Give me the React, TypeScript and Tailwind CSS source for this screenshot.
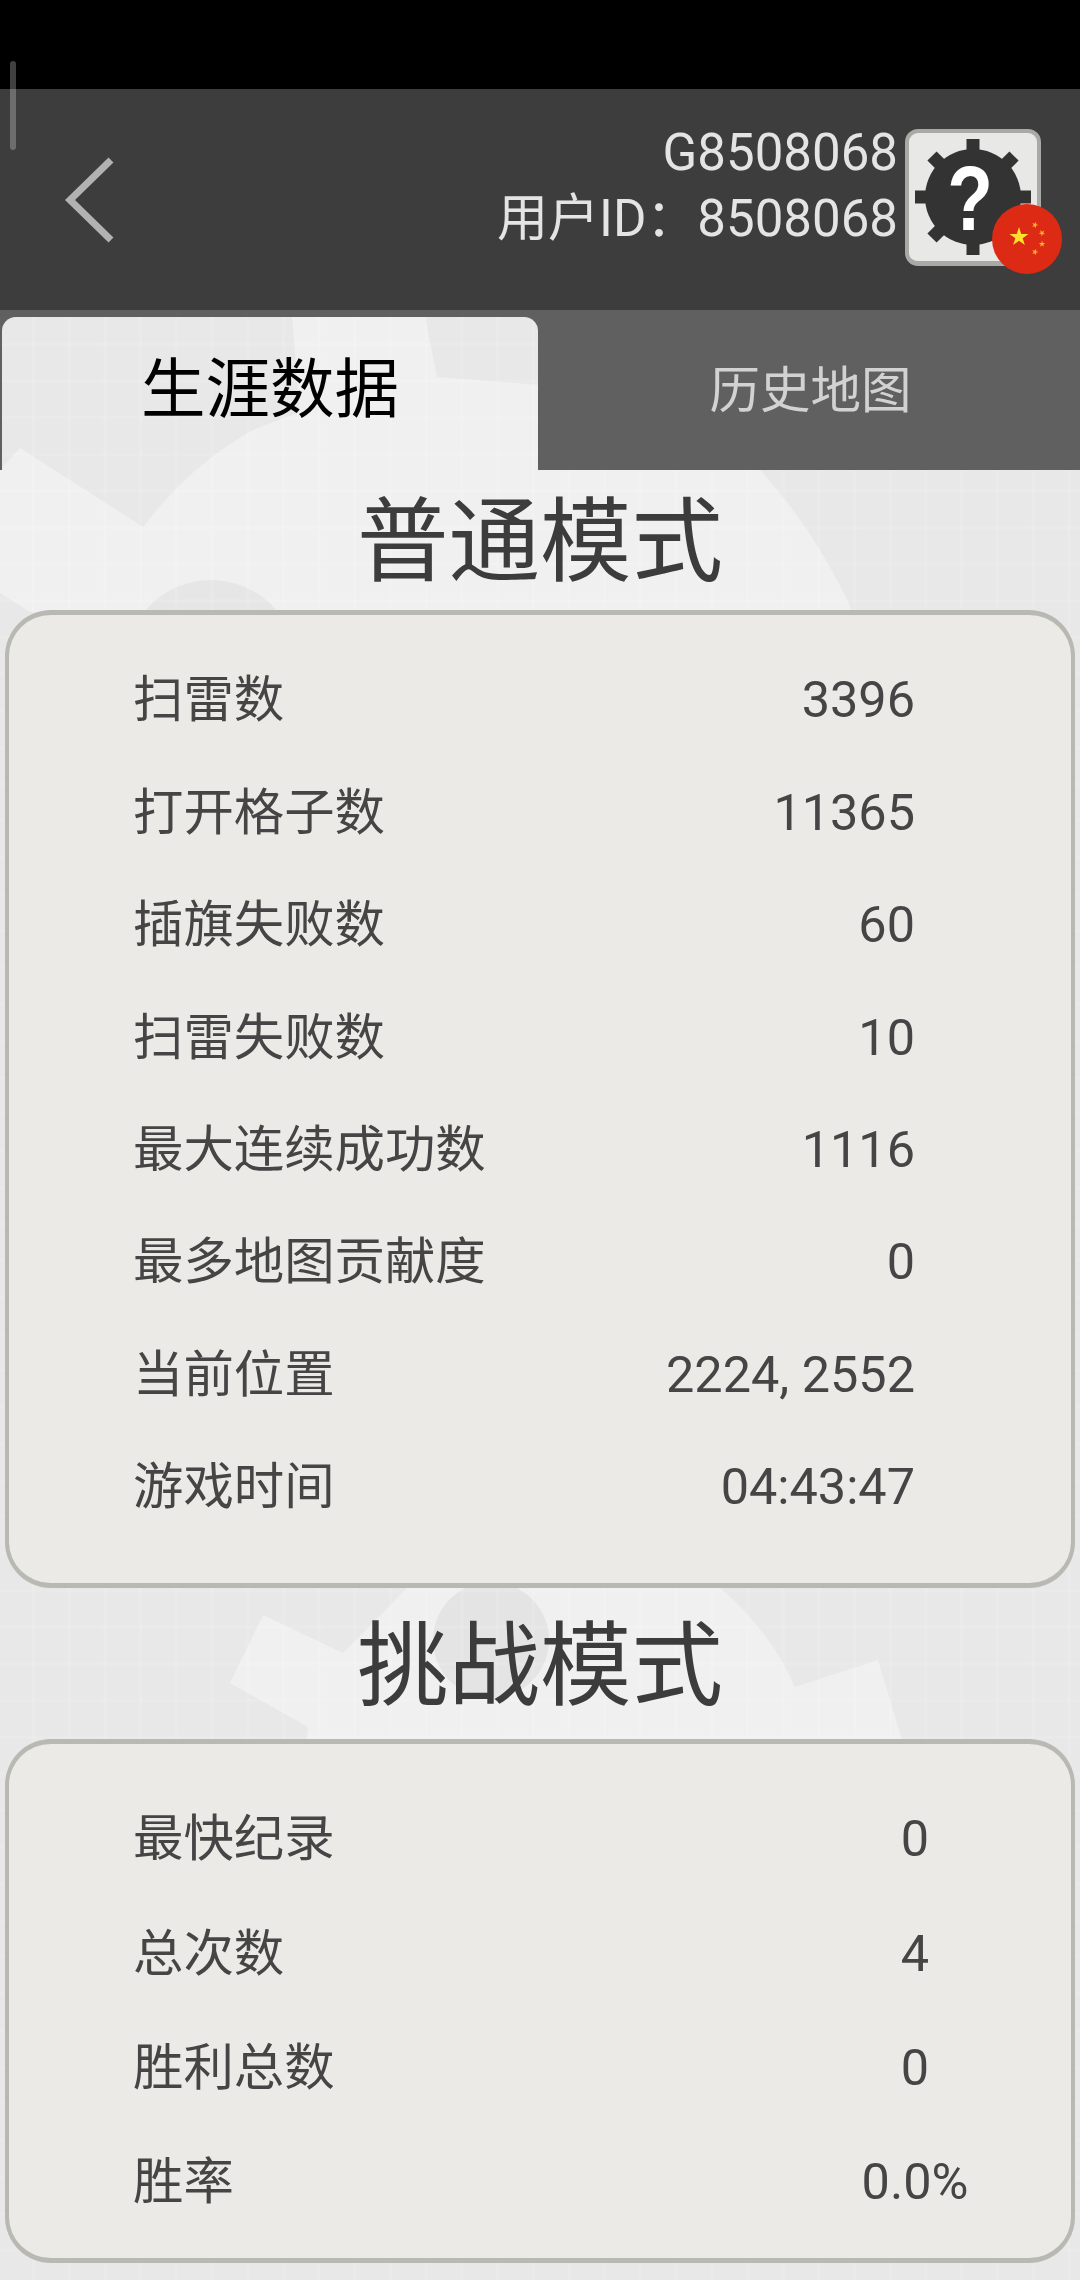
type StatRow = {
  label: string;
  value: string;
};

const normalStats: StatRow[] = [
  { label: "扫雷数", value: "3396" },
  { label: "打开格子数", value: "11365" },
  { label: "插旗失败数", value: "60" },
  { label: "扫雷失败数", value: "10" },
  { label: "最大连续成功数", value: "1116" },
  { label: "最多地图贡献度", value: "0" },
  { label: "当前位置", value: "2224, 2552" },
  { label: "游戏时间", value: "04:43:47" },
];

const challengeStats: StatRow[] = [
  { label: "最快纪录", value: "0" },
  { label: "总次数", value: "4" },
  { label: "胜利总数", value: "0" },
  { label: "胜率", value: "0.0%" },
];

function starPoints(cx: number, cy: number, r: number, rotate = 0) {
  const points: string[] = [];
  for (let i = 0; i < 10; i++) {
    const radius = i % 2 === 0 ? r : r * 0.382;
    const angle = ((-90 + rotate + i * 36) * Math.PI) / 180;
    points.push(`${cx + radius * Math.cos(angle)},${cy + radius * Math.sin(angle)}`);
  }
  return points.join(" ");
}

function PageBackground() {
  return (
    <svg
      className="absolute left-0 top-0 h-[2280px] w-[1080px]"
      viewBox="0 0 1080 2280"
    >
      <defs>
        <pattern id="grid" x="32" y="13" width="35.7" height="36.65" patternUnits="userSpaceOnUse">
          <rect width="3" height="36.65" fill="#ffffff" fillOpacity="0.1" />
          <rect width="35.7" height="3" fill="#ffffff" fillOpacity="0.1" />
        </pattern>
      </defs>
      <rect x="0" y="310" width="1080" height="1970" fill="#e8e8e8" />
      <path
        d="M0 470 L20 448 L143 527 Q190 465 253 430 L300 412 L292 317 L425 317 L437 377 L540 385 L760 470 Q815 530 853 612 L30 612 L0 593 Z"
        fill="#f0f0f0"
      />
      <circle cx="211" cy="666" r="86" fill="#e6e6e6" />
      <path
        d="M263 1615 L343 1653 L410 1585 L717 1585 Q770 1630 795 1687 L878 1660 L902 1740 L307 1740 L308 1727 L230 1683 Z"
        fill="#f0f0f0"
      />
      <circle cx="491" cy="1640" r="58" fill="#e4e4e4" />
      <rect x="0" y="310" width="1080" height="1970" fill="url(#grid)" />
    </svg>
  );
}

function GearBadge() {
  const teeth = [0, 45, 90, 135, 180, 225, 270, 315];
  return (
    <div className="relative h-[137px] w-[136px] shrink-0 rounded-[13px] border-4 border-b-[5px] border-[#a9a9a6] bg-[#e8e8e6]">
      <svg className="absolute -left-1 -top-1 h-[137px] w-[136px]" viewBox="0 0 136 137">
        {teeth.map((deg) => (
          <rect
            key={deg}
            x="61.5"
            y="10"
            width="13"
            height="24"
            fill="#333333"
            transform={`rotate(${deg} 68 68)`}
          />
        ))}
        <circle cx="68" cy="68" r="48" fill="#333333" />
        <text
          transform="translate(65 101) scale(0.85 1.03)"
          textAnchor="middle"
          fontSize="88"
          fontWeight="700"
          fontFamily="'Liberation Sans', sans-serif"
          fill="#ffffff"
        >
          ?
        </text>
      </svg>
      <svg
        className="absolute left-[83px] top-[71px] h-[70px] w-[70px]"
        viewBox="0 0 70 70"
      >
        <circle cx="35" cy="35" r="35" fill="#dd2a14" />
        <polygon points={starPoints(27, 33, 10)} fill="#fde12b" />
        <polygon points={starPoints(43, 21, 3.4, 20)} fill="#f9b32a" />
        <polygon points={starPoints(50, 29, 3.4, 40)} fill="#f9b32a" />
        <polygon points={starPoints(50, 40, 3.4, 0)} fill="#f9b32a" />
        <polygon points={starPoints(43, 48, 3.4, 20)} fill="#f9b32a" />
      </svg>
    </div>
  );
}

function AppHeader() {
  return (
    <div className="flex h-[221px] items-center bg-[#3d3d3d] pl-[62px] pr-[39px]">
      <svg className="h-[88px] w-[54px]" viewBox="0 0 54 88" fill="none">
        <path d="M49 4 L8 44 L49 84" stroke="#b2b2b2" strokeWidth="7" />
      </svg>
      <div className="ml-auto mr-[7px] pb-[27px] text-right text-[51px] leading-[66px] text-[#e4e4e4]">
        <div>G8508068</div>
        <div>用户ID：8508068</div>
      </div>
      <div className="pb-1">
        <GearBadge />
      </div>
    </div>
  );
}

function Tabs() {
  return (
    <div className="flex h-[160px] overflow-hidden">
      <div className="ml-[2px] mt-[7px] flex w-[536px] shrink-0 items-center justify-center rounded-t-[14px] pb-[6px] text-[64.5px] text-black shadow-[0_0_0_700px_#606060]">
        生涯数据
      </div>
      <div className="relative flex flex-1 items-center justify-center pl-[3px] pt-[1px] text-[50.5px] text-[#d2d2d2]">
        历史地图
      </div>
    </div>
  );
}

function StatsCard({
  rows,
  rowClass,
  cardClass,
  centered,
}: {
  rows: StatRow[];
  rowClass: string;
  cardClass: string;
  centered?: boolean;
}) {
  return (
    <div className={`mx-[5px] rounded-[46px] border-x-4 border-y-[5px] border-[#b9b9b3] bg-[#ebeae6] ${cardClass}`}>
      {rows.map((row) => (
        <div
          key={row.label}
          className={`flex items-center justify-between pl-[124px] text-[50.4px] text-[#454545] ${rowClass} ${
            centered ? "pr-[56px]" : "pr-[156px]"
          }`}
        >
          <span>{row.label}</span>
          <span className={centered ? "w-[200px] text-center" : ""}>{row.value}</span>
        </div>
      ))}
    </div>
  );
}

export default function App() {
  return (
    <div className="relative h-[2280px] w-[1080px] overflow-hidden bg-black [font-family:Roboto,'Noto_Sans_CJK_SC',sans-serif]">
      <PageBackground />
      <div className="relative">
        <div className="h-[89px] bg-black" />
        <AppHeader />
        <Tabs />
        <div className="flex h-[140px] items-center justify-center pt-[6px] text-[91.5px] text-[#3c3c3c]">
          普通模式
        </div>
        <StatsCard rows={normalStats} rowClass="h-[112.4px]" cardClass="h-[978px] pt-[29px]" />
        <div className="flex h-[151px] items-center justify-center pt-[6px] text-[91.5px] text-[#3c3c3c]">
          挑战模式
        </div>
        <StatsCard
          rows={challengeStats}
          rowClass="h-[114.3px]"
          cardClass="h-[524px] pt-[38px]"
          centered
        />
      </div>
      {/* scroll indicator from the status overlay */}
      <div className="absolute left-[10px] top-[61px] h-[89px] w-[6px] rounded-full bg-white/25" />
    </div>
  );
}
